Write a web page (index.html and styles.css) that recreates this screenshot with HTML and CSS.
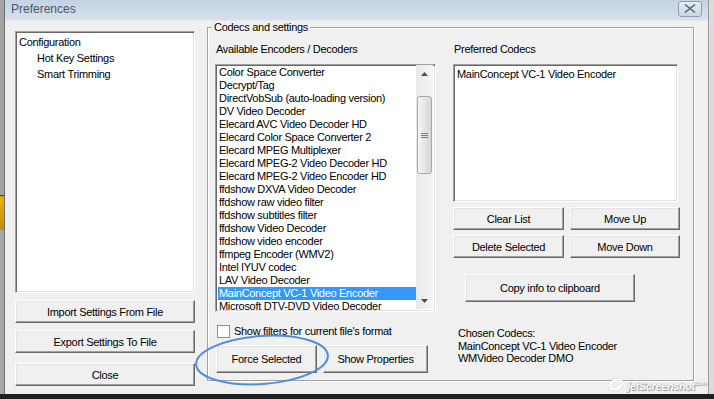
FILE: index.html
```html
<html lang="en">
  <head>
    <link rel="stylesheet" href="styles.css">
  </head>
  <body>
    <div class="edge"></div>
    <div class="window">
      <div class="titlebar">
        <span class="title">Preferences</span>
        <span class="close-btn">
          <svg width="12" height="9" viewBox="0 0 12 9"><path d="M1 0.5 L11 8.5 M11 0.5 L1 8.5" stroke="#5d6978" stroke-width="1.6" fill="none"/></svg>
        </span>
      </div>
      <div class="client">
        <div class="sidebar">
          <div class="tree sunken">
            <div class="node">Configuration</div>
            <div class="node child">Hot Key Settings</div>
            <div class="node child">Smart Trimming</div>
          </div>
          <div class="btn side-btn">Import Settings From File</div>
          <div class="btn side-btn">Export Settings To File</div>
          <div class="btn side-btn close">Close</div>
        </div>
        <fieldset class="group">
          <legend>Codecs and settings</legend>
          <div class="group-body">
            <div class="col-left">
              <div class="label">Available Encoders / Decoders</div>
              <div class="codec-list sunken">
                <div class="items">
                  <div class="item">Color Space Converter</div>
                  <div class="item">Decrypt/Tag</div>
                  <div class="item">DirectVobSub (auto-loading version)</div>
                  <div class="item">DV Video Decoder</div>
                  <div class="item">Elecard AVC Video Decoder HD</div>
                  <div class="item">Elecard Color Space Converter 2</div>
                  <div class="item">Elecard MPEG Multiplexer</div>
                  <div class="item">Elecard MPEG-2 Video Decoder HD</div>
                  <div class="item">Elecard MPEG-2 Video Encoder HD</div>
                  <div class="item">ffdshow DXVA Video Decoder</div>
                  <div class="item">ffdshow raw video filter</div>
                  <div class="item">ffdshow subtitles filter</div>
                  <div class="item">ffdshow Video Decoder</div>
                  <div class="item">ffdshow video encoder</div>
                  <div class="item">ffmpeg Encoder (WMV2)</div>
                  <div class="item">Intel IYUV codec</div>
                  <div class="item">LAV Video Decoder</div>
                  <div class="item selected">MainConcept VC-1 Video Encoder</div>
                  <div class="item">Microsoft DTV-DVD Video Decoder</div>
                </div>
                <div class="scrollbar">
                  <div class="arrow">
                    <svg width="7" height="4" viewBox="0 0 7 4"><path d="M0 4 L3.5 0 L7 4 Z" fill="#4d4d4d"/></svg>
                  </div>
                  <div class="track">
                    <div class="thumb"><span class="grip"></span></div>
                  </div>
                  <div class="arrow">
                    <svg width="7" height="4" viewBox="0 0 7 4"><path d="M0 0 L3.5 4 L7 0 Z" fill="#4d4d4d"/></svg>
                  </div>
                </div>
              </div>
              <label class="check-row"><span class="checkbox"></span>Show filters for current file's format</label>
              <div class="action-row">
                <div class="btn force">Force Selected</div>
                <div class="btn props">Show Properties</div>
              </div>
            </div>
            <div class="col-right">
              <div class="label">Preferred Codecs</div>
              <div class="preferred-list sunken">
                <div class="item">MainConcept VC-1 Video Encoder</div>
              </div>
              <div class="btn-grid">
                <div class="btn">Clear List</div>
                <div class="btn">Move Up</div>
                <div class="btn">Delete Selected</div>
                <div class="btn">Move Down</div>
              </div>
              <div class="btn copy">Copy info to clipboard</div>
              <div class="chosen">
                <div>Chosen Codecs:</div>
                <div>MainConcept VC-1 Video Encoder</div>
                <div>WMVideo Decoder DMO</div>
              </div>
            </div>
          </div>
        </fieldset>
      </div>
      <div class="watermark"><span class="swoosh"></span>jetScreenshot<sup>com</sup></div>
    </div>
    <div class="right-edge"></div>
    <div class="taskbar"></div>
    <svg class="circle-mark" width="150" height="64" viewBox="0 0 150 64">
      <ellipse cx="75" cy="32" rx="66" ry="24" transform="rotate(-4 75 32)" stroke="#4f8fd6" stroke-width="2" fill="none"/>
    </svg>
  </body>
</html>
```

FILE: styles.css
```css
body, html {
  margin: 0;
  width: 714px;
  height: 399px;
  overflow: hidden;
}
body {
  position: relative;
  display: flex;
  background: #f0f0f0;
  color: #000;
  font-family: 'Liberation Sans', Tahoma, sans-serif;
  font-size: 11px;
  letter-spacing: -0.3px;
}
.edge {
  width: 4px;
  height: 394px;
  background: linear-gradient(#a4a4a4 195px, #2a2a2a 195px, #e7b000 197px, #c88d00 230px, #a8a8a8 230px);
}
.window {
  flex: 1;
  height: 394px;
  display: flex;
  flex-direction: column;
  border-left: 1px solid #6e6e6e;
  position: relative;
}
.right-edge {
  width: 5px;
  height: 394px;
  border-left: 1px solid #9a9a9a;
  background: #dcdcdc;
}
.taskbar {
  position: absolute;
  left: 0;
  right: 0;
  bottom: 0;
  height: 5px;
  background: #1f1f1f;
}
.titlebar {
  height: 20px;
  display: flex;
  align-items: center;
  justify-content: space-between;
  background: linear-gradient(#c3d2e3, #d7e1ec);
  border-bottom: 1px solid #e2e8ef;
}
.title {
  margin-left: 6px;
  margin-top: -2px;
  font-size: 12px;
  letter-spacing: 0;
  color: #4b5866;
}
.close-btn {
  width: 22px;
  height: 14px;
  margin-right: 6px;
  margin-top: -3px;
  display: flex;
  align-items: center;
  justify-content: center;
  border: 1px solid #8e9eb1;
  border-radius: 3px;
  background: linear-gradient(#e4ebf2, #cbd7e3);
}
.client {
  flex: 1;
  display: flex;
  padding-left: 10px;
}
.sunken {
  box-sizing: border-box;
  background: #fff;
  border: 1px solid;
  border-color: #a0a0a0 #fff #fff #a0a0a0;
  box-shadow: inset 1px 1px 0 #696969, inset -1px -1px 0 #e3e3e3;
}
.sidebar {
  width: 180px;
  padding-top: 10px;
  display: flex;
  flex-direction: column;
}
.tree {
  height: 262px;
  padding: 2px 3px;
}
.node {
  height: 16px;
  line-height: 16px;
}
.node.child {
  padding-left: 18px;
}
.btn {
  box-sizing: border-box;
  display: flex;
  align-items: center;
  justify-content: center;
  background: #f0f0f0;
  border: 1px solid;
  border-color: #fff #696969 #696969 #fff;
  box-shadow: inset -1px -1px 0 #a0a0a0, inset 1px 1px 0 #e3e3e3;
  white-space: nowrap;
}
.side-btn {
  height: 23px;
  margin-top: 7px;
}
.side-btn.close {
  margin-top: 10px;
}
.group {
  width: 487px;
  height: 360px;
  box-sizing: border-box;
  margin: 0 0 0 12px;
  padding: 9px 7px 0 7px;
  border: 1px solid #a0a0a0;
  box-shadow: inset 1px 1px 0 #fff, 1px 1px 0 #fff;
}
.group legend {
  padding: 0 2px;
  margin-left: -3px;
  line-height: 13px;
}
.group-body {
  display: flex;
  gap: 17px;
}
.label {
  line-height: 13px;
  padding-left: 1px;
  margin-bottom: 8px;
}
.col-left {
  width: 221px;
}
.codec-list {
  height: 248px;
  display: flex;
  padding: 1px 0 0 2px;
  overflow: hidden;
}
.items {
  flex: 1;
  overflow: hidden;
}
.item {
  height: 13px;
  line-height: 13px;
  padding-left: 1px;
  white-space: nowrap;
}
.item.selected {
  background: #3399ff;
  color: #fff;
}
.scrollbar {
  width: 17px;
  margin: -1px 2px 2px 0;
  display: flex;
  flex-direction: column;
  background: linear-gradient(90deg, #e9e9e9, #f5f5f5);
}
.arrow {
  height: 17px;
  display: flex;
  align-items: center;
  justify-content: center;
}
.track {
  flex: 1;
  padding-top: 14px;
}
.thumb {
  height: 78px;
  margin: 0 1px;
  box-sizing: border-box;
  border: 1px solid #a7a7a7;
  border-radius: 3px;
  background: linear-gradient(90deg, #f6f6f6, #e3e3e3 60%, #d6d6d6);
  display: flex;
  align-items: center;
  justify-content: center;
}
.grip {
  width: 7px;
  height: 5px;
  background: repeating-linear-gradient(#7c7c7c 0 1px, transparent 1px 2px);
}
.check-row {
  display: flex;
  align-items: center;
  gap: 4px;
  margin-top: 13px;
  padding-left: 2px;
  line-height: 13px;
}
.checkbox {
  width: 13px;
  height: 13px;
  box-sizing: border-box;
  background: #fff;
  border: 1px solid #8f8f8f;
}
.action-row {
  display: flex;
  gap: 6px;
  margin-top: 7px;
  padding-left: 1px;
}
.action-row .btn {
  height: 28px;
}
.force {
  width: 101px;
}
.props {
  width: 105px;
}
.col-right {
  width: 227px;
}
.preferred-list {
  width: 225px;
  height: 138px;
  padding: 3px 2px;
}
.btn-grid {
  display: grid;
  grid-template-columns: 111px 110px;
  column-gap: 6px;
  row-gap: 5px;
  margin-top: 5px;
}
.btn-grid .btn {
  height: 23px;
}
.btn.copy {
  width: 170px;
  height: 28px;
  margin: 16px 0 0 12px;
}
.chosen {
  margin: 25px 0 0 5px;
  line-height: 12.5px;
}
.watermark {
  position: absolute;
  right: 2px;
  bottom: 2px;
  font-style: italic;
  font-weight: bold;
  font-size: 11px;
  color: #fff;
  text-shadow: 0 0 1px #8a8a8a, 1px 1px 1px #9a9a9a;
  letter-spacing: -0.4px;
}
.watermark sup {
  font-size: 6px;
}
.swoosh {
  display: inline-block;
  width: 12px;
  height: 7px;
  margin-right: 3px;
  border: 2px solid #fff;
  border-radius: 50%;
  box-shadow: 0 0 1px #8a8a8a;
  transform: rotate(-20deg);
}
.circle-mark {
  position: absolute;
  left: 187px;
  top: 328px;
}
```
